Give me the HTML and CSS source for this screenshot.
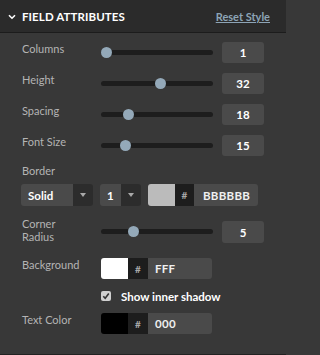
FILE: index.html
```html
<!DOCTYPE html>
<html>
<head>
<meta charset="utf-8">
<link rel="stylesheet" href="styles.css">
</head>
<body>
<div class="panel">
  <div class="header">
    <div class="title">
      <svg class="chev" width="8" height="6" viewBox="0 0 8 6"><path d="M1 1.2 L4 4.2 L7 1.2" fill="none" stroke="#ffffff" stroke-width="1.6"/></svg>
      <span>FIELD ATTRIBUTES</span>
    </div>
    <a class="reset">Reset Style</a>
  </div>
  <div class="content">
    <div class="row">
      <div class="label">Columns</div>
      <div class="slider"><div class="track"></div><div class="thumb" style="left:0px"></div></div>
      <div class="value">1</div>
    </div>
    <div class="row">
      <div class="label">Height</div>
      <div class="slider"><div class="track"></div><div class="thumb" style="left:54px"></div></div>
      <div class="value">32</div>
    </div>
    <div class="row">
      <div class="label">Spacing</div>
      <div class="slider"><div class="track"></div><div class="thumb" style="left:22px"></div></div>
      <div class="value">18</div>
    </div>
    <div class="row">
      <div class="label">Font Size</div>
      <div class="slider"><div class="track"></div><div class="thumb" style="left:19px"></div></div>
      <div class="value">15</div>
    </div>

    <div class="section-label">Border</div>
    <div class="border-row">
      <div class="select sel-style">
        <span class="sel-text">Solid</span>
        <span class="sel-arrow"><i class="tri"></i></span>
      </div>
      <div class="select sel-width">
        <span class="sel-text">1</span>
        <span class="sel-arrow"><i class="tri"></i></span>
      </div>
      <div class="color color-wide">
        <span class="swatch" style="background:#bbbbbb"></span>
        <span class="hash">#</span>
        <span class="hex">BBBBBB</span>
      </div>
    </div>

    <div class="row row-radius">
      <div class="label label-two">Corner<br>Radius</div>
      <div class="slider"><div class="track"></div><div class="thumb" style="left:27px"></div></div>
      <div class="value">5</div>
    </div>

    <div class="crow">
      <div class="label">Background</div>
      <div class="color">
        <span class="swatch" style="background:#ffffff"></span>
        <span class="hash">#</span>
        <span class="hex">FFF</span>
      </div>
    </div>
    <div class="check-row">
      <span class="checkbox">
        <svg width="10" height="10" viewBox="0 0 10 10"><path d="M2.3 5.2 L4.2 7.3 L7.8 2.6" fill="none" stroke="#333" stroke-width="1.6"/></svg>
      </span>
      <span class="check-text">Show inner shadow</span>
    </div>
    <div class="crow">
      <div class="label">Text Color</div>
      <div class="color">
        <span class="swatch" style="background:#000000"></span>
        <span class="hash">#</span>
        <span class="hex">000</span>
      </div>
    </div>
  </div>
</div>
</body>
</html>
```

FILE: styles.css
```css
* { box-sizing: border-box; }
html, body { margin: 0; padding: 0; }
body {
  background: #383838;
  font-family: Lato, "Open Sans", sans-serif;
  overflow: hidden;
}
.panel {
  width: 286px;
  height: 355px;
  background: #383838;
  border-bottom: 1px solid #222222;
}
.header {
  height: 33px;
  background: #2b2b2b;
  border-bottom: 1px solid #1c1c1c;
  display: flex;
  align-items: center;
  justify-content: space-between;
  padding: 0 16px 0 8px;
}
.title {
  display: flex;
  align-items: center;
  gap: 6px;
  color: #ffffff;
  font-weight: 700;
  font-size: 11.5px;
  letter-spacing: 0.1px;
}
.chev { display: block; margin-top: 1px; }
.reset {
  color: #8da4b6;
  font-size: 11px;
  font-weight: 700;
  text-decoration: underline;
  margin-top: 1px;
}
.content {
  padding: 9px 0 0 21px;
}
.row {
  display: grid;
  grid-template-columns: 80px 112px 51px;
  align-items: start;
  height: 21px;
  margin-bottom: 10px;
}
.label {
  color: #b4b4b4;
  font-size: 11px;
  line-height: 14px;
  padding-left: 1px;
}
.slider {
  position: relative;
  height: 21px;
  display: flex;
  align-items: center;
}
.track {
  width: 112px;
  height: 5px;
  border-radius: 3px;
  background: #1d1d1d;
}
.thumb {
  position: absolute;
  top: 5px;
  width: 11px;
  height: 11px;
  border-radius: 50%;
  background: #94a9b9;
}
.value {
  margin-left: 9px;
  width: 42px;
  height: 21px;
  border-radius: 3px;
  background: #4a4a4a;
  color: #ffffff;
  font-weight: 700;
  font-size: 11.5px;
  display: flex;
  align-items: center;
  justify-content: center;
}
.section-label {
  color: #b4b4b4;
  font-size: 11px;
  line-height: 14px;
  padding-left: 1px;
  margin-top: -2px;
  margin-bottom: 6px;
}
.border-row {
  display: flex;
  gap: 7px;
  height: 22px;
  margin-bottom: 11px;
}
.select {
  display: flex;
  height: 22px;
  border-radius: 3px;
  overflow: hidden;
}
.sel-text {
  background: #4a4a4a;
  color: #ffffff;
  font-weight: 700;
  font-size: 11.5px;
  display: flex;
  align-items: center;
  padding-left: 7px;
}
.sel-style .sel-text { width: 52px; }
.sel-width .sel-text { width: 21px; }
.sel-arrow {
  width: 20px;
  background: #2c2c2c;
  display: flex;
  align-items: center;
  justify-content: center;
}
.tri {
  display: block;
  width: 0;
  height: 0;
  border-left: 3.5px solid transparent;
  border-right: 3.5px solid transparent;
  border-top: 4px solid #a9a9a9;
}
.color {
  display: flex;
  height: 21px;
  width: 111px;
  border-radius: 3px;
  overflow: hidden;
}
.color-wide { width: 110px; height: 22px; }
.swatch { width: 27px; }
.hash {
  width: 20px;
  background: #1d1d1d;
  color: #a9a9a9;
  font-size: 10px;
  font-weight: 700;
  display: flex;
  align-items: center;
  justify-content: center;
}
.color-wide .hash { width: 19px; }
.hex {
  flex: 1;
  background: #4a4a4a;
  color: #f0f0f0;
  font-size: 11.5px;
  font-weight: 700;
  display: flex;
  align-items: center;
  padding-left: 7px;
  letter-spacing: 0.3px;
}
.color-wide .hex { padding-left: 9px; }
.row-radius {
  height: 26px;
  margin-bottom: 15px;
}
.label-two { line-height: 13px; }
.row-radius .slider { margin-top: 4px; }
.row-radius .value { margin-top: 4px; height: 22px; }
.crow {
  display: grid;
  grid-template-columns: 80px 111px;
  align-items: start;
  height: 21px;
}
.check-row {
  display: flex;
  align-items: center;
  margin: 10px 0 10px 80px;
  height: 14px;
}
.checkbox {
  width: 10px;
  height: 10px;
  border-radius: 2px;
  background: #d0d0d0;
  display: flex;
}
.checkbox svg { display: block; }
.check-text {
  color: #ffffff;
  font-weight: 700;
  font-size: 11.5px;
  margin-left: 10px;
}
```
